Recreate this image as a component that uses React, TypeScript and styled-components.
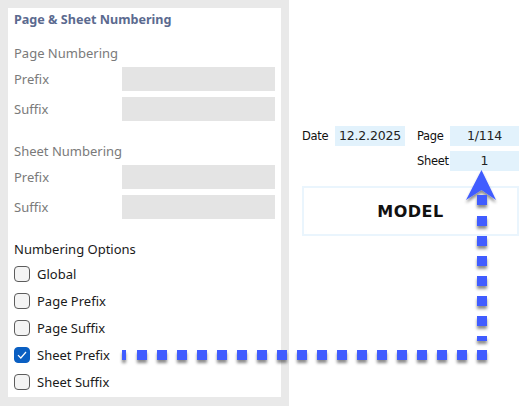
import * as React from "react";
import { FC } from "react";
import styled, { createGlobalStyle } from "styled-components";

const GlobalStyle = createGlobalStyle`
  html, body {
    margin: 0;
    padding: 0;
    background: #e9e9e9;
  }
  body {
    font-family: "Noto Sans", "Open Sans", sans-serif;
  }
`;

type OptionData = { label: string; checked: boolean };

const options: OptionData[] = [
  { label: "Global", checked: false },
  { label: "Page Prefix", checked: false },
  { label: "Page Suffix", checked: false },
  { label: "Sheet Prefix", checked: true },
  { label: "Sheet Suffix", checked: false },
];

const FieldRow: FC<{ label: string }> = (props) => (
  <Row>
    <FieldLabel>{props.label}</FieldLabel>
    <FieldBox />
  </Row>
);

const Option: FC<OptionData> = (props) => (
  <OptionRow>
    <Box checked={props.checked}>
      {props.checked && (
        <svg width="10" height="8" viewBox="0 0 10 8">
          <path d="M1 4.2 L3.8 7 L9 1" fill="none" stroke="#fff" strokeWidth="1.2" />
        </svg>
      )}
    </Box>
    <OptionText>{props.label}</OptionText>
  </OptionRow>
);

// dotted leader from the checkbox over to the sheet number
const Leader: FC = () => {
  const across = [];
  for (let x = 137; x <= 477; x += 20) across.push(x);
  const up = [195, 216, 236, 256, 276, 296, 316];
  return (
    <Overlay width="525" height="406" viewBox="0 0 525 406">
      <defs>
        <filter id="drop" x="-50%" y="-50%" width="200%" height="200%">
          <feDropShadow dx="0" dy="3" stdDeviation="1.6" floodColor="#000" floodOpacity="0.45" />
        </filter>
      </defs>
      <g fill="#405cff" filter="url(#drop)">
        <rect x="122" y="350" width="4" height="10" />
        {across.map((x) => (
          <rect key={x} x={x} y="350" width="10" height="10" />
        ))}
        {up.map((y) => (
          <rect key={y} x="477" y={y} width="10" height="10" />
        ))}
        <rect x="477" y="336" width="10" height="5" />
        <path d="M481.5 170 L496 200 L481.5 190 L466 200 Z" />
      </g>
    </Overlay>
  );
};

export default function App() {
  return (
    <Page>
      <GlobalStyle />
      <Panel>
        <Title>Page &amp; Sheet Numbering</Title>
        <Section>
          <SectionHead>Page Numbering</SectionHead>
          <FieldRow label="Prefix" />
          <FieldRow label="Suffix" />
        </Section>
        <Section>
          <SectionHead>Sheet Numbering</SectionHead>
          <FieldRow label="Prefix" />
          <FieldRow label="Suffix" />
        </Section>
        <Options>
          <OptionsHead>Numbering Options</OptionsHead>
          {options.map((o) => (
            <Option key={o.label} {...o} />
          ))}
        </Options>
      </Panel>
      <Sheet>
        <Stamp>
          <StampRow>
            <StampLabel>Date</StampLabel>
            <StampValue>12.2.2025</StampValue>
            <span />
            <StampLabel>Page</StampLabel>
            <StampValue>1/114</StampValue>
          </StampRow>
          <StampRow>
            <span />
            <span />
            <span />
            <StampLabel>Sheet</StampLabel>
            <StampValue>1</StampValue>
          </StampRow>
          <ModelBox>MODEL</ModelBox>
        </Stamp>
      </Sheet>
      <Leader />
    </Page>
  );
}

const Page = styled.div`
  position: relative;
  width: 525px;
  height: 406px;
  display: flex;
  overflow: hidden;
`;

const Panel = styled.div`
  flex: none;
  margin: 8px 0 9px 8px;
  width: 273px;
  background: #fff;
  padding: 2px 6px 0 6px;
  box-sizing: border-box;
  display: flex;
  flex-direction: column;
`;

const Title = styled.div`
  font-size: 12.6px;
  font-weight: 700;
  color: #5b6a8f;
  height: 20px;
  line-height: 20px;
`;

const Section = styled.div`
  display: flex;
  flex-direction: column;
  gap: 6px;
  margin-top: 13px;
  & + & {
    margin-top: 20px;
  }
`;

const SectionHead = styled.div`
  font-size: 13px;
  color: #7a7a7a;
  height: 20px;
  line-height: 20px;
  margin-bottom: -2px;
`;

const Row = styled.div`
  display: flex;
  align-items: center;
  height: 24px;
`;

const FieldLabel = styled.div`
  width: 108px;
  font-size: 13px;
  color: #7a7a7a;
`;

const FieldBox = styled.div`
  flex: 1;
  height: 24px;
  background: #e4e4e4;
`;

const Options = styled.div`
  display: flex;
  flex-direction: column;
  margin-top: 19px;
`;

const OptionsHead = styled.div`
  font-size: 13px;
  color: #1a1a1a;
  height: 22px;
  line-height: 22px;
`;

const OptionRow = styled.div`
  display: flex;
  align-items: center;
  gap: 7px;
  height: 27px;
`;

const Box = styled.div<{ checked: boolean }>`
  width: 16px;
  height: 16px;
  box-sizing: border-box;
  border-radius: 4px;
  border: 1px solid ${(p) => (p.checked ? "#0a5fc2" : "#5c5c5c")};
  background: ${(p) => (p.checked ? "#0a5fc2" : "#f4f4f4")};
  display: flex;
  align-items: center;
  justify-content: center;
`;

const OptionText = styled.span`
  font-size: 13px;
  color: #1a1a1a;
`;

const Sheet = styled.div`
  flex: 1;
  margin-left: 8px;
  background: #fff;
  padding: 126px 6px 0 13px;
  box-sizing: border-box;
`;

const Stamp = styled.div`
  font-family: "DejaVu Sans", "Liberation Sans", sans-serif;
  display: flex;
  flex-direction: column;
  gap: 5px;
`;

const StampRow = styled.div`
  display: grid;
  grid-template-columns: 33px 70px 12px 33px 69px;
  align-items: center;
`;

const StampLabel = styled.span`
  font-size: 11.5px;
  color: #111;
  letter-spacing: -0.3px;
`;

const StampValue = styled.div`
  height: 20px;
  line-height: 20px;
  background: #e2f2fc;
  font-size: 12.5px;
  color: #222;
  text-align: center;
  letter-spacing: -0.2px;
`;

const ModelBox = styled.div`
  margin-top: 10px;
  height: 50px;
  width: 217px;
  border: 2px solid #eaf5fd;
  box-sizing: border-box;
  display: flex;
  align-items: center;
  justify-content: center;
  font-size: 16px;
  font-weight: 700;
  color: #111;
  letter-spacing: 0.5px;
`;

const Overlay = styled.svg`
  position: absolute;
  left: 0;
  top: 0;
  pointer-events: none;
`;
